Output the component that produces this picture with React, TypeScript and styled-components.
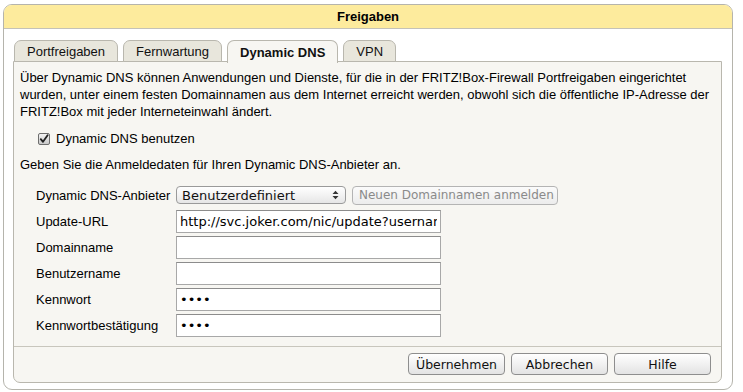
import styled, { createGlobalStyle } from "styled-components";

const GlobalStyle = createGlobalStyle`
  body {
    margin: 0;
    background: #ffffff;
    font-family: "Liberation Sans", Arial, sans-serif;
    font-size: 13px;
    color: #000;
  }
`;

const tabs = ["Portfreigaben", "Fernwartung", "Dynamic DNS", "VPN"];

const fields = [
  { label: "Update-URL", value: "http://svc.joker.com/nic/update?username=", type: "text" },
  { label: "Domainname", value: "", type: "text" },
  { label: "Benutzername", value: "", type: "text" },
  { label: "Kennwort", value: "abcd", type: "password" },
  { label: "Kennwortbestätigung", value: "abcd", type: "password" }
];

const App = () => {
  return (
    <>
      <GlobalStyle />
      <Frame>
        <Header>Freigaben</Header>
        <FrameBody>
          <TabBar>
            {tabs.map((t) => (
              <Tab key={t} $active={t === "Dynamic DNS"}>
                {t}
              </Tab>
            ))}
          </TabBar>
          <Panel>
            <Intro>
              Über Dynamic DNS können Anwendungen und Dienste, für die in der FRITZ!Box-Firewall Portfreigaben eingerichtet
              <br />
              wurden, unter einem festen Domainnamen aus dem Internet erreicht werden, obwohl sich die öffentliche IP-Adresse der
              <br />
              FRITZ!Box mit jeder Interneteinwahl ändert.
            </Intro>
            <CheckRow>
              <CheckBox>
                <svg width="10" height="10" viewBox="0 0 10 10">
                  <path d="M1.8 5.2 L4 7.8 L8.6 1.2" fill="none" stroke="#222" strokeWidth="1.8" strokeLinecap="round" strokeLinejoin="round" />
                </svg>
              </CheckBox>
              Dynamic DNS benutzen
            </CheckRow>
            <Hint>Geben Sie die Anmeldedaten für Ihren Dynamic DNS-Anbieter an.</Hint>
            <Form>
              <FieldRow>
                <FieldLabel>Dynamic DNS-Anbieter</FieldLabel>
                <SelectBox>
                  <span>Benutzerdefiniert</span>
                  <svg width="7" height="10" viewBox="0 0 7 10">
                    <path d="M0.5 4 L3.5 0.8 L6.5 4 Z M0.5 6 L3.5 9.2 L6.5 6 Z" fill="#333" />
                  </svg>
                </SelectBox>
                <GhostButton disabled>Neuen Domainnamen anmelden</GhostButton>
              </FieldRow>
              {fields.map((f) => (
                <FieldRow key={f.label}>
                  <FieldLabel>{f.label}</FieldLabel>
                  <TextInput type={f.type} value={f.value} readOnly />
                </FieldRow>
              ))}
            </Form>
            <Spacer />
            <Footer>
              <ActionButton>Übernehmen</ActionButton>
              <ActionButton>Abbrechen</ActionButton>
              <ActionButton>Hilfe</ActionButton>
            </Footer>
          </Panel>
        </FrameBody>
      </Frame>
    </>
  );
};

const Frame = styled.div`
  margin: 4px 0 0 3px;
  width: 730px;
  height: 386px;
  box-sizing: border-box;
  border: 1px solid #b5b4ac;
  border-radius: 9px;
  background: #ffffff;
  display: flex;
  flex-direction: column;
  overflow: hidden;
`;

const Header = styled.div`
  height: 23px;
  flex-shrink: 0;
  background: #fdeb9d;
  border-bottom: 1px solid #c4c2b8;
  display: flex;
  align-items: center;
  justify-content: center;
  font-weight: bold;
  font-size: 13px;
`;

const FrameBody = styled.div`
  flex: 1;
  display: flex;
  flex-direction: column;
  padding: 11px 10px 6px 9px;
`;

const TabBar = styled.div`
  display: flex;
  gap: 5px;
  padding-left: 1px;
  height: 22px;
  position: relative;
  z-index: 1;
`;

const Tab = styled.div<{ $active?: boolean }>`
  box-sizing: border-box;
  height: ${({ $active }) => ($active ? "23px" : "22px")};
  padding: 0 12px;
  display: flex;
  align-items: center;
  border: 1px solid #b9b7ae;
  border-bottom: ${({ $active }) => ($active ? "none" : "1px solid #b9b7ae")};
  border-radius: 7px 7px 0 0;
  background: ${({ $active }) => ($active ? "#f7f6f2" : "#e8e6dc")};
  font-weight: ${({ $active }) => ($active ? "bold" : "normal")};
  font-size: 13px;
  color: #111;
`;

const Panel = styled.div`
  flex: 1;
  display: flex;
  flex-direction: column;
  margin-top: -1px;
  border: 1px solid #b9b7ae;
  border-radius: 0 0 7px 7px;
  background: #f7f6f2;
`;

const Intro = styled.p`
  margin: 0;
  padding: 7px 6px 0 6px;
  line-height: 17px;
  white-space: nowrap;
`;

const CheckRow = styled.label`
  display: flex;
  align-items: center;
  gap: 6px;
  margin-top: 10px;
  padding-left: 24px;
  height: 17px;
`;

const CheckBox = styled.span`
  width: 12px;
  height: 12px;
  box-sizing: border-box;
  border: 1px solid #6e6e6e;
  border-radius: 2px;
  background: linear-gradient(#f4f4f4, #c9c9c9);
  display: flex;
  align-items: center;
  justify-content: center;
`;

const Hint = styled.div`
  margin-top: 9px;
  padding-left: 6px;
  line-height: 17px;
`;

const Form = styled.div`
  margin-top: 9px;
  padding-left: 22px;
  display: flex;
  flex-direction: column;
`;

const FieldRow = styled.div`
  display: flex;
  align-items: center;
  height: 26px;
`;

const FieldLabel = styled.span`
  width: 140px;
  flex-shrink: 0;
  font-size: 13px;
`;

const SelectBox = styled.div`
  width: 170px;
  height: 18px;
  margin-right: 6px;
  box-sizing: border-box;
  border: 1px solid #9a9a9a;
  border-radius: 4px;
  background: linear-gradient(#ffffff, #e6e6e6);
  display: flex;
  align-items: center;
  justify-content: space-between;
  padding: 0 6px 0 5px;
  font-family: "DejaVu Sans", "Liberation Sans", sans-serif;
  font-size: 13px;
  color: #111;
`;

const GhostButton = styled.button`
  width: 206px;
  height: 19px;
  box-sizing: border-box;
  margin: 0;
  border: 1px solid #b4b4b4;
  border-radius: 4px;
  background: linear-gradient(#fbfbfb, #ececec);
  padding: 0 0 0 6px;
  white-space: nowrap;
  text-align: left;
  font-family: "DejaVu Sans", "Liberation Sans", sans-serif;
  font-size: 12px;
  color: #8a8a8a;
`;

const TextInput = styled.input`
  width: 265px;
  height: 23px;
  box-sizing: border-box;
  margin: 0;
  border: 1px solid #a8a8a8;
  border-top-color: #8c8c8c;
  background: #ffffff;
  padding: 0 3px;
  font-family: "DejaVu Sans", "Liberation Sans", sans-serif;
  font-size: 13px;
  color: #000;
  outline: none;
`;

const Spacer = styled.div`
  flex: 1;
`;

const Footer = styled.div`
  border-top: 1px solid #c8c6bd;
  display: flex;
  justify-content: flex-end;
  gap: 6px;
  padding: 6px 10px 7px 0;
`;

const ActionButton = styled.button`
  width: 97px;
  height: 22px;
  box-sizing: border-box;
  margin: 0;
  border: 1px solid #8e8e8e;
  border-radius: 4px;
  background: linear-gradient(#ffffff, #e3e3e3);
  font-family: "DejaVu Sans", "Liberation Sans", sans-serif;
  font-size: 12.5px;
  color: #111;
  padding: 0;
`;

export default App;
